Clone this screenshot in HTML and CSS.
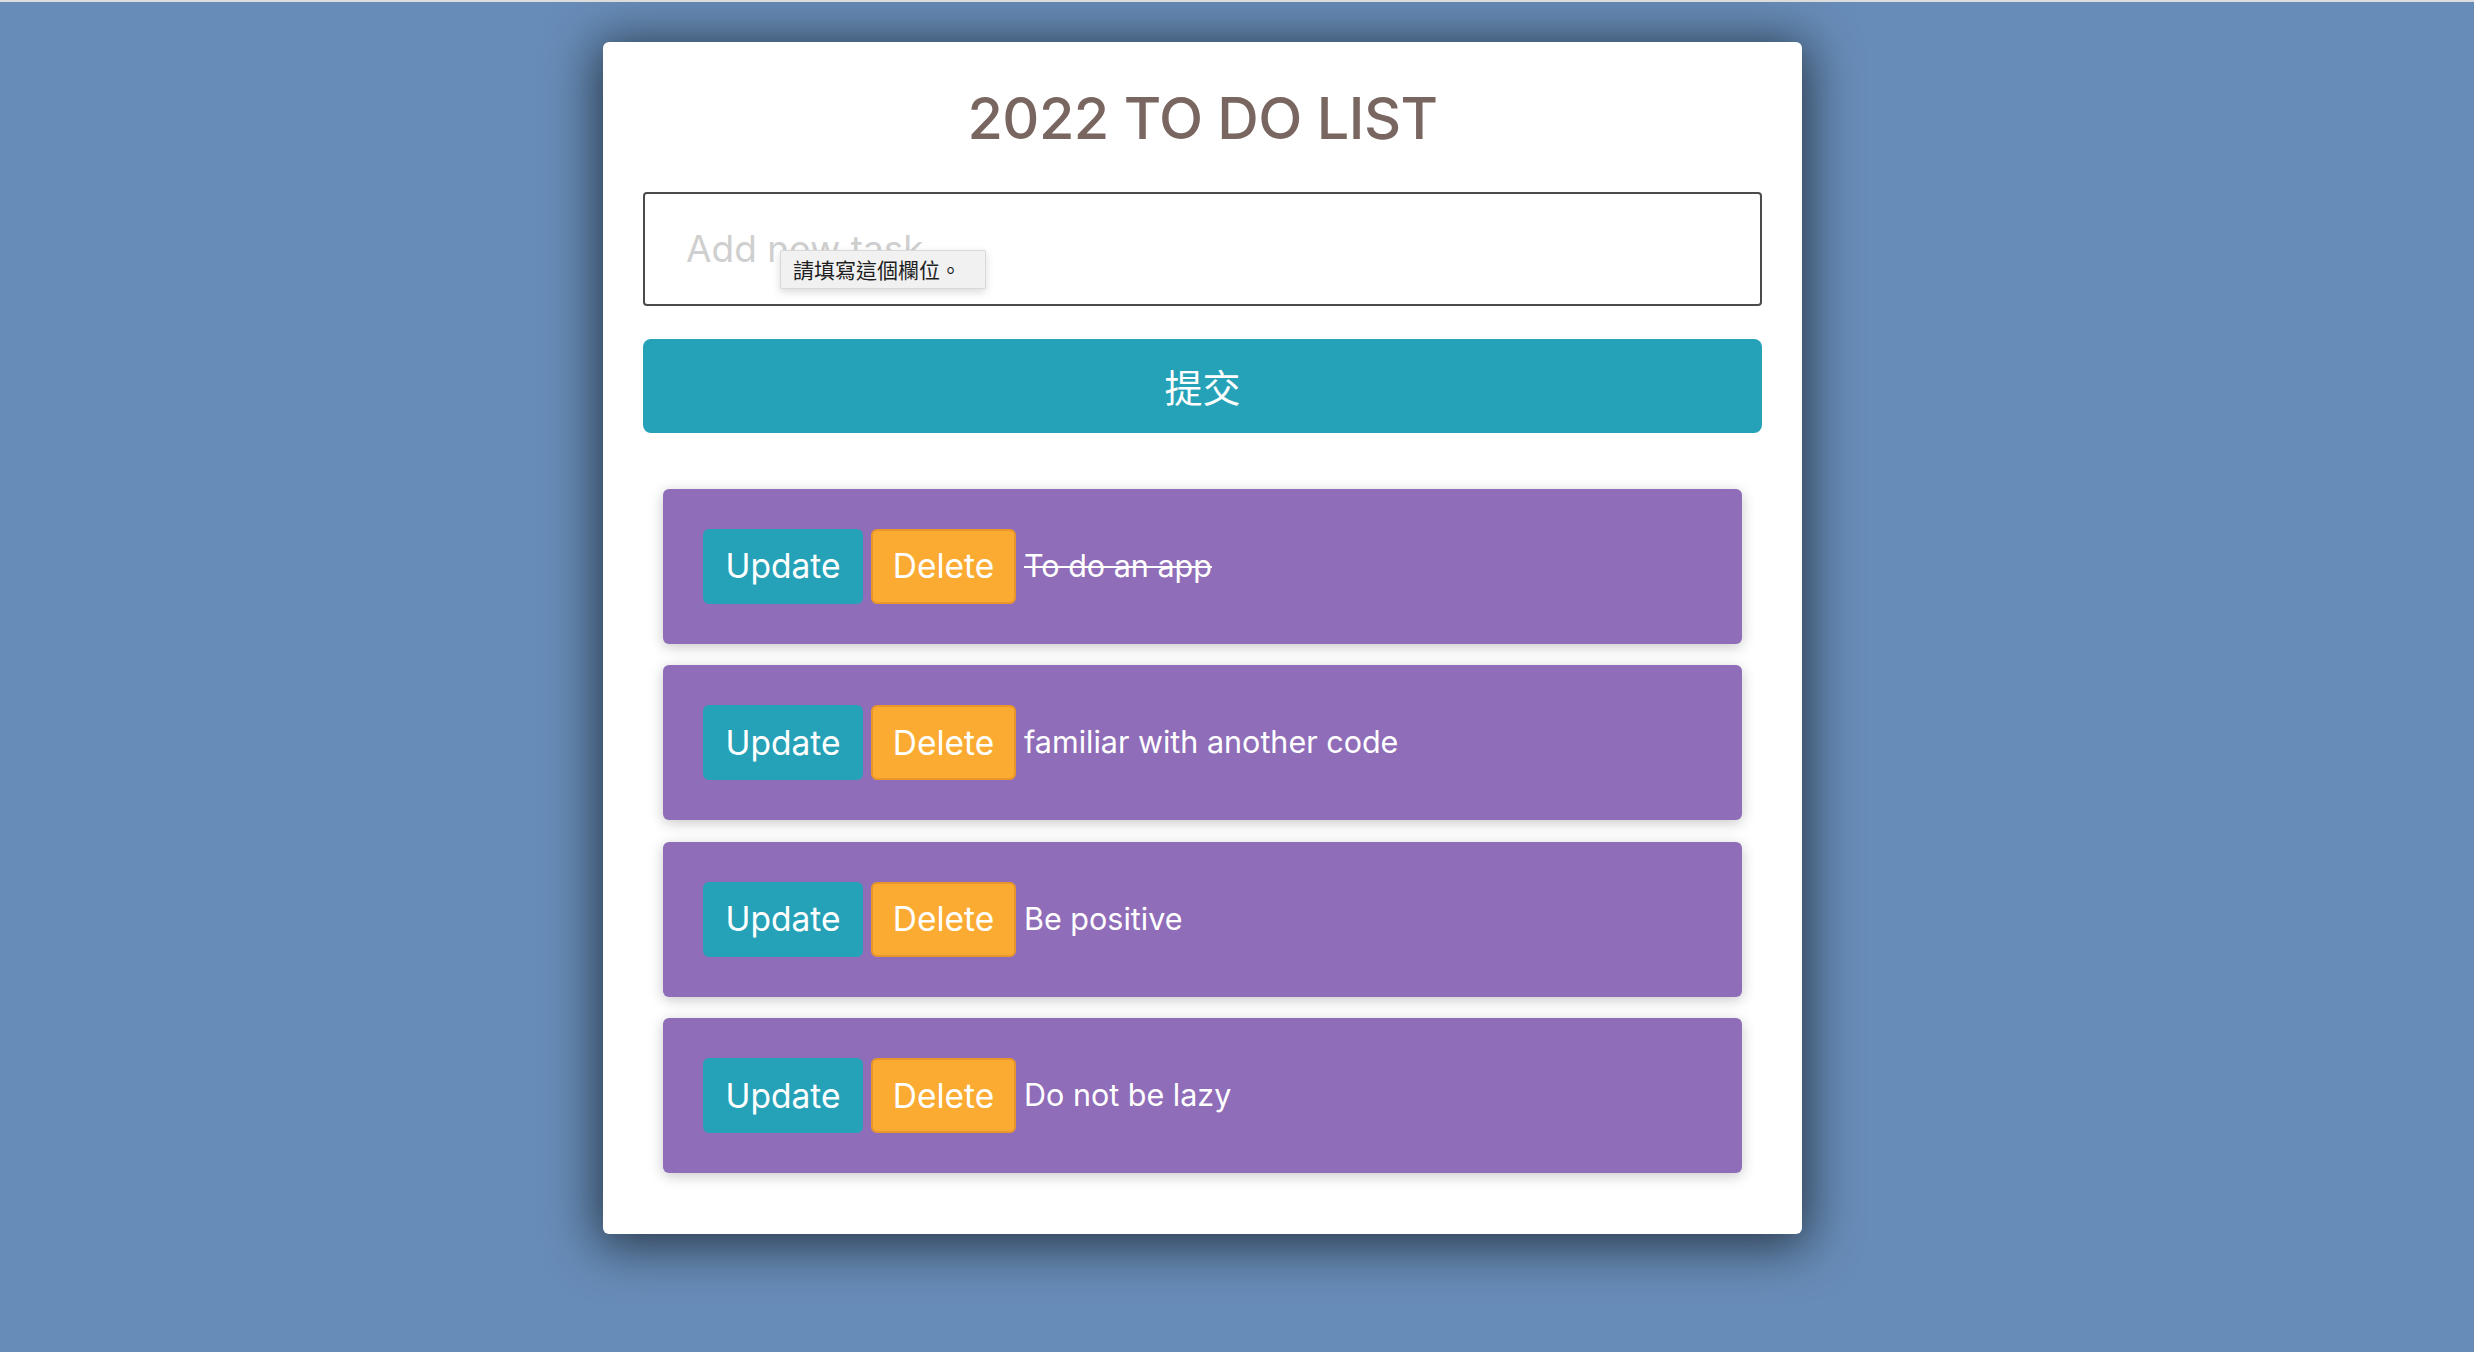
FILE: index.html
```html
<!DOCTYPE html>
<html lang="zh-Hant">
<head>
<meta charset="utf-8">
<title>2022 TO DO LIST</title>
<link rel="stylesheet" href="styles.css">
</head>
<body>
<main class="card">
  <h1 class="title">2022 TO DO LIST</h1>
  <form class="new-task">
    <div class="input-wrap">
      <input class="task-input" type="text" placeholder="Add new task" required>
      <div class="tooltip">請填寫這個欄位。</div>
    </div>
    <button class="submit" type="submit">提交</button>
  </form>
  <ul class="tasks">
    <li class="task">
      <button class="btn btn-update">Update</button>
      <button class="btn btn-delete">Delete</button>
      <span class="task-text done">To do an app</span>
    </li>
    <li class="task">
      <button class="btn btn-update">Update</button>
      <button class="btn btn-delete">Delete</button>
      <span class="task-text">familiar with another code</span>
    </li>
    <li class="task">
      <button class="btn btn-update">Update</button>
      <button class="btn btn-delete">Delete</button>
      <span class="task-text">Be positive</span>
    </li>
    <li class="task">
      <button class="btn btn-update">Update</button>
      <button class="btn btn-delete">Delete</button>
      <span class="task-text">Do not be lazy</span>
    </li>
  </ul>
</main>
</body>
</html>
```
FILE: styles.css
```css
html, body {
  margin: 0;
  padding: 0;
}
body {
  background: #678cb7;
  border-top: 2px solid #dcdcdc;
  min-height: 1350px;
  font-family: Inter, "Liberation Sans", "Noto Sans CJK TC", sans-serif;
}
.card {
  width: 1199px;
  box-sizing: border-box;
  margin: 40px 0 0 603px;
  padding: 0 40px 61px;
  background: #fff;
  border-radius: 6px;
  box-shadow: 0 6px 50px 6px rgba(0, 0, 0, 0.6);
}
.title {
  margin: 0;
  padding: 48px 0 44px;
  font-size: 57.5px;
  line-height: 1;
  font-weight: 500;
  color: #796661;
  text-align: center;
  letter-spacing: -0.5px;
}
.new-task {
  display: flex;
  flex-direction: column;
  gap: 33px;
}
.input-wrap {
  position: relative;
}
.task-input {
  display: block;
  width: 100%;
  height: 114px;
  box-sizing: border-box;
  border: 2px solid #4b4b4b;
  border-radius: 4px;
  padding: 0 0 0 41px;
  font-family: Inter, "Liberation Sans", sans-serif;
  font-size: 37px;
  color: #333;
  outline: none;
}
.task-input::placeholder {
  color: #cfcfcf;
}
.tooltip {
  position: absolute;
  left: 137px;
  top: 58px;
  width: 206px;
  height: 39px;
  box-sizing: border-box;
  padding: 0 0 0 12px;
  background: #f1f1f1;
  border: 1px solid #d9d9d9;
  border-radius: 2px;
  box-shadow: 0 3px 8px rgba(0, 0, 0, 0.15);
  font-family: "Noto Sans CJK TC", sans-serif;
  font-size: 21px;
  line-height: 37px;
  color: #1e1e1e;
  white-space: nowrap;
}
.submit {
  height: 94px;
  border: none;
  border-radius: 8px;
  background: #26a2b8;
  color: #fff;
  font-family: "Noto Sans CJK TC", sans-serif;
  font-size: 38px;
  padding: 0;
}
.tasks {
  list-style: none;
  margin: 56px 20px 0;
  padding: 0;
  display: flex;
  flex-direction: column;
  gap: 21.5px;
}
.task {
  display: flex;
  align-items: center;
  height: 155px;
  box-sizing: border-box;
  padding: 0 40px;
  background: #8f6db8;
  border-radius: 6px;
  box-shadow: 0 3px 14px rgba(0, 0, 0, 0.22);
}
.btn {
  height: 75px;
  box-sizing: border-box;
  border-radius: 6px;
  color: #fff;
  font-family: Inter, "Liberation Sans", sans-serif;
  font-size: 33.5px;
  padding: 0;
  margin-right: 8px;
}
.btn-update {
  width: 160px;
  background: #26a2b8;
  border: 2px solid #26a2b8;
}
.btn-delete {
  width: 145px;
  background: #fbab32;
  border: 2px solid #e8952a;
}
.task-text {
  color: #fff;
  font-size: 30.5px;
  position: relative;
  top: -1px;
}
.task-text.done {
  text-decoration: line-through;
  text-decoration-thickness: 2px;
}
```
